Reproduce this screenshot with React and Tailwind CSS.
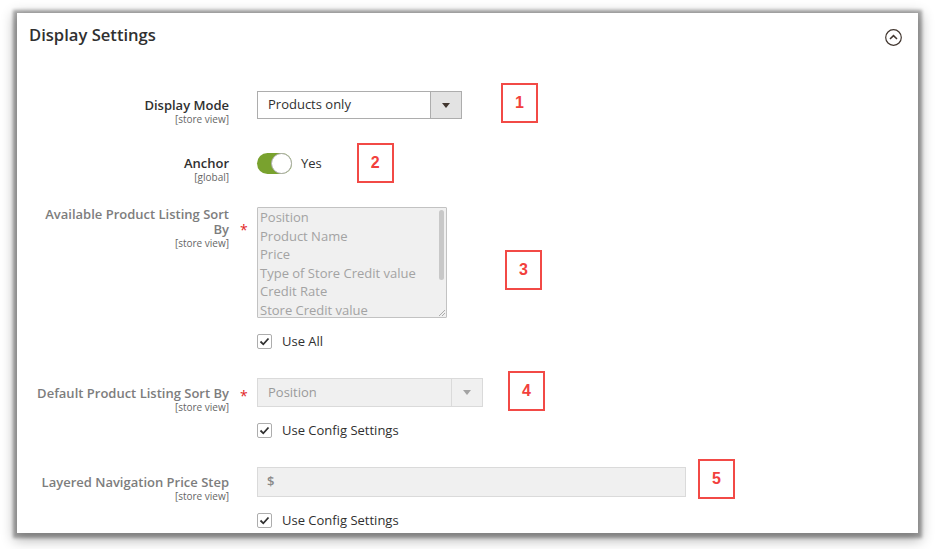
import React from 'react';

const font = { fontFamily: '"Open Sans", "Liberation Sans", sans-serif' };

function Marker({ n, className }) {
  return (
    <div
      className={`w-[37px] h-[40px] border-2 border-[#f24a46] flex items-center justify-center text-[#f2403c] text-[16px] font-bold shrink-0 ${className}`}
      style={{ fontFamily: '"Liberation Sans", Arial, sans-serif' }}
    >
      {n}
    </div>
  );
}

function Label({ title, scope, muted, className = '' }) {
  return (
    <div className={`w-[212px] shrink-0 text-right leading-[15px] ${className}`}>
      <div className={`text-[13px] font-semibold ${muted ? 'text-[#7d7d7d]' : 'text-[#303030]'}`}>{title}</div>
      <div className="text-[10px] leading-[13px] text-[#666]">[{scope}]</div>
    </div>
  );
}

function Check({ label, className = '' }) {
  return (
    <div className={`flex items-center h-[15px] ${className}`}>
      <span className="w-[15px] h-[15px] border border-[#adadad] rounded-[2px] bg-white flex items-center justify-center">
        <svg width="11" height="11" viewBox="0 0 11 11">
          <path d="M1.5 5.5 L4.3 8.3 L9.5 2.5" fill="none" stroke="#303030" strokeWidth="1.8" />
        </svg>
      </span>
      <span className="ml-[10px] text-[13px] text-[#303030]">{label}</span>
    </div>
  );
}

function Triangle({ color }) {
  return (
    <svg width="8" height="5" viewBox="0 0 8 5">
      <path d="M0 0 H8 L4 5 Z" fill={color} />
    </svg>
  );
}

export default function App() {
  const sortOptions = ['Position', 'Product Name', 'Price', 'Type of Store Credit value', 'Credit Rate', 'Store Credit value'];

  return (
    <div className="w-[936px] h-[549px] bg-white overflow-hidden pt-[13px] pl-[17px]" style={font}>
      <div className="w-[901px] h-[520px] bg-white overflow-hidden shadow-[0_1px_3px_4px_rgba(0,0,0,0.3),0_4px_12px_3px_rgba(0,0,0,0.3)]">
        {/* Header */}
        <div className="flex items-center justify-between pl-[12px] pr-[16px] pt-[10px]">
          <h2 className="text-[16.6px] leading-[24px] font-semibold text-[#303030]">Display Settings</h2>
          <svg width="17" height="17" viewBox="0 0 17 17" className="mt-[4px]">
            <circle cx="8.5" cy="8.5" r="7.8" fill="none" stroke="#41362f" strokeWidth="1.2" />
            <path d="M5 10 L8.5 6.6 L12 10" fill="none" stroke="#41362f" strokeWidth="1.5" />
          </svg>
        </div>

        {/* Display Mode */}
        <div className="flex items-start mt-[44px]">
          <Label title="Display Mode" scope="store view" className="pt-[7px]" />
          <div className="w-[28px] shrink-0" />
          <div className="flex items-start">
            <div className="w-[205px] h-[28px] border border-[#adadad] bg-white flex">
              <div className="flex-1 flex items-center pl-[10px] text-[13px] text-[#303030]">Products only</div>
              <div className="w-[31px] bg-[#e3e3e3] border-l border-[#adadad] flex items-center justify-center">
                <Triangle color="#41362f" />
              </div>
            </div>
            <Marker n="1" className="ml-[39px] -mt-[8px]" />
          </div>
        </div>

        {/* Anchor */}
        <div className="flex items-start mt-[27px]">
          <Label title="Anchor" scope="global" className="pt-[3px]" />
          <div className="w-[28px] shrink-0" />
          <div className="flex items-start">
            <div className="flex items-center h-[21px]">
              <div className="w-[35px] h-[21px] rounded-full bg-[#79a22e] relative">
                <span className="absolute right-0 top-0 w-[21px] h-[21px] rounded-full bg-white border border-[#adadad]" />
              </div>
              <span className="ml-[9px] text-[13px] text-[#303030]">Yes</span>
            </div>
            <Marker n="2" className="ml-[35px] -mt-[10px]" />
          </div>
        </div>

        {/* Available Product Listing Sort By */}
        <div className="flex items-start mt-[23px]">
          <Label title={<>Available Product Listing Sort<br />By</>} scope="store view" muted />
          <div className="w-[28px] shrink-0 pt-[15px] pl-[11px] text-[#e22626] text-[14px] leading-[15px]">*</div>
          <div>
            <div className="flex items-start">
              <div className="w-[190px] h-[111px] border border-[#c2c2c2] bg-[#f0f0f0] relative overflow-hidden rounded-[1px]">
                <div className="pl-[2px] text-[13px] leading-[18.6px] text-[#a3a3a3]">
                  {sortOptions.map(o => <div key={o}>{o}</div>)}
                </div>
                <span className="absolute right-[2px] top-[2px] w-[5px] h-[70px] rounded-full bg-[#c8c8c8]" />
                <svg width="7" height="7" viewBox="0 0 7 7" className="absolute right-[1px] bottom-[1px]">
                  <path d="M1 7 L7 1 M4 7 L7 4" stroke="#9a9a9a" strokeWidth="0.8" />
                </svg>
              </div>
              <Marker n="3" className="ml-[58px] mt-[43px]" />
            </div>
            <Check label="Use All" className="mt-[16px]" />
          </div>
        </div>

        {/* Default Product Listing Sort By */}
        <div className="flex items-start mt-[29px]">
          <Label title="Default Product Listing Sort By" scope="store view" muted className="pt-[8px]" />
          <div className="w-[28px] shrink-0 pt-[10px] pl-[11px] text-[#e22626] text-[14px] leading-[15px]">*</div>
          <div>
            <div className="flex items-start">
              <div className="w-[226px] h-[29px] border border-[#dadada] bg-[#f0f0f0] flex">
                <div className="flex-1 flex items-center pl-[10px] text-[13px] text-[#9a9a9a]">Position</div>
                <div className="w-[31px] border-l border-[#dadada] flex items-center justify-center">
                  <Triangle color="#a3a3a3" />
                </div>
              </div>
              <Marker n="4" className="ml-[25px] -mt-[7px] -mb-[4px]" />
            </div>
            <Check label="Use Config Settings" className="mt-[16px]" />
          </div>
        </div>

        {/* Layered Navigation Price Step */}
        <div className="flex items-start mt-[29px]">
          <Label title="Layered Navigation Price Step" scope="store view" muted className="pt-[8px]" />
          <div className="w-[28px] shrink-0" />
          <div>
            <div className="flex items-start">
              <div className="w-[429px] h-[30px] border border-[#dadada] bg-[#f0f0f0] flex items-center pl-[9px] text-[13px] font-semibold text-[#8a8a8a]">$</div>
              <Marker n="5" className="ml-[12px] -mt-[8px] -mb-[2px]" />
            </div>
            <Check label="Use Config Settings" className="mt-[16px]" />
          </div>
        </div>
      </div>
    </div>
  );
}
